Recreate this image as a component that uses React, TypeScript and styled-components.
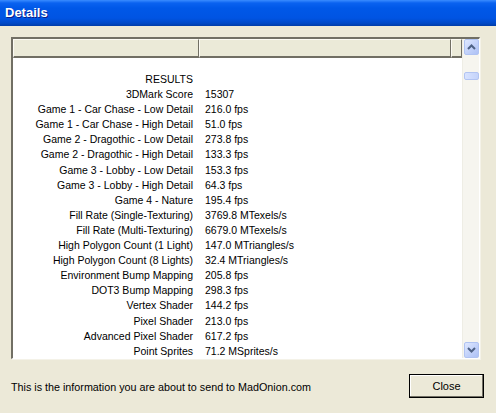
import styled, { createGlobalStyle } from 'styled-components';

const GlobalStyle = createGlobalStyle`
  html, body {
    margin: 0;
    padding: 0;
    background: #ece9d8;
  }
  body {
    font-family: "Liberation Sans", Arial, sans-serif;
  }
`;

const results: [string, string][] = [
  ['RESULTS', ''],
  ['3DMark Score', '15307'],
  ['Game 1 - Car Chase - Low Detail', '216.0 fps'],
  ['Game 1 - Car Chase - High Detail', '51.0 fps'],
  ['Game 2 - Dragothic - Low Detail', '273.8 fps'],
  ['Game 2 - Dragothic - High Detail', '133.3 fps'],
  ['Game 3 - Lobby - Low Detail', '153.3 fps'],
  ['Game 3 - Lobby - High Detail', '64.3 fps'],
  ['Game 4 - Nature', '195.4 fps'],
  ['Fill Rate (Single-Texturing)', '3769.8 MTexels/s'],
  ['Fill Rate (Multi-Texturing)', '6679.0 MTexels/s'],
  ['High Polygon Count (1 Light)', '147.0 MTriangles/s'],
  ['High Polygon Count (8 Lights)', '32.4 MTriangles/s'],
  ['Environment Bump Mapping', '205.8 fps'],
  ['DOT3 Bump Mapping', '298.3 fps'],
  ['Vertex Shader', '144.2 fps'],
  ['Pixel Shader', '213.0 fps'],
  ['Advanced Pixel Shader', '617.2 fps'],
  ['Point Sprites', '71.2 MSprites/s'],
];

const ArrowUp = () => (
  <svg width="9" height="6" viewBox="0 0 9 6">
    <path d="M1 5 L4.5 1.5 L8 5" fill="none" stroke="#4d6185" strokeWidth="2" />
  </svg>
);

const ArrowDown = () => (
  <svg width="9" height="6" viewBox="0 0 9 6">
    <path d="M1 1 L4.5 4.5 L8 1" fill="none" stroke="#4d6185" strokeWidth="2" />
  </svg>
);

const App = () => {
  return (
    <Window>
      <GlobalStyle />
      <TitleBar>Details</TitleBar>
      <Body>
        <ListBox>
          <ListMain>
            <Header>
              <HeaderCell $width={186} />
              <HeaderCell $width={252} />
              <HeaderCell $width={11} />
            </Header>
            <Rows>
              {results.map(([label, value]) => (
                <Row key={label}>
                  <Label>{label}</Label>
                  <Value>{value}</Value>
                </Row>
              ))}
            </Rows>
          </ListMain>
          <ScrollBar>
            <ScrollButton>
              <ArrowUp />
            </ScrollButton>
            <Thumb />
            <Track />
            <ScrollButton>
              <ArrowDown />
            </ScrollButton>
          </ScrollBar>
        </ListBox>
        <Footer>
          <FooterText>This is the information you are about to send to MadOnion.com</FooterText>
          <CloseButton>Close</CloseButton>
        </Footer>
      </Body>
    </Window>
  );
};

const Window = styled.div`
  width: 496px;
  height: 413px;
  display: flex;
  flex-direction: column;
  background: #ece9d8;
  overflow: hidden;
`;

const TitleBar = styled.div`
  height: 26px;
  display: flex;
  align-items: center;
  padding-left: 5px;
  padding-bottom: 1px;
  box-sizing: border-box;
  color: #fff;
  font-weight: bold;
  font-size: 13px;
  text-shadow: 1px 1px 0 #0a1e8c;
  background: linear-gradient(
    to bottom,
    #3a8cff 0px,
    #0a62f0 3px,
    #0058e8 8px,
    #0054e3 18px,
    #0049c8 23px,
    #003ca8 26px
  );
`;

const Body = styled.div`
  flex: 1;
  display: flex;
  flex-direction: column;
  padding: 11px 14px 0 11px;
`;

const ListBox = styled.div`
  height: 322px;
  margin-right: 2px;
  display: flex;
  box-sizing: border-box;
  background: #fff;
  border-top: 2px solid #716f64;
  border-left: 2px solid #716f64;
  border-right: 1px solid #fff;
  border-bottom: 1px solid #fff;
  box-shadow: 1px 1px 0 #f4f2e8;
`;

const ListMain = styled.div`
  flex: 1;
  display: flex;
  flex-direction: column;
  overflow: hidden;
`;

const Header = styled.div`
  display: flex;
  height: 19px;
  flex-shrink: 0;
`;

const HeaderCell = styled.div<{ $width: number }>`
  width: ${(p) => p.$width}px;
  flex-shrink: 0;
  box-sizing: border-box;
  background: #ebead8;
  border-top: 1px solid #fbfaf3;
  border-left: 1px solid #fbfaf3;
  border-right: 1px solid #716f64;
  border-bottom: 2px solid #716f64;
`;

const Rows = styled.div`
  padding-top: 14px;
  font-size: 10.5px;
  color: #000;
`;

const Row = styled.div`
  display: grid;
  grid-template-columns: 186px 1fr;
  height: 15.1px;
  line-height: 15px;
  white-space: nowrap;
`;

const Label = styled.span`
  text-align: right;
  padding-right: 6px;
`;

const Value = styled.span`
  padding-left: 6px;
`;

const ScrollBar = styled.div`
  width: 16px;
  display: flex;
  flex-direction: column;
  background: #f6f5ef;
  border-left: 1px solid #eeede5;
`;

const ScrollButton = styled.div`
  height: 16px;
  margin: 0 0 0 1px;
  display: flex;
  align-items: center;
  justify-content: center;
  box-sizing: border-box;
  border: 1px solid #b0c3f2;
  border-radius: 2px;
  background: linear-gradient(135deg, #dfe8ff 0%, #bfcff9 60%, #adc1f5 100%);
`;

const Thumb = styled.div`
  height: 8px;
  margin: 17px 0 0 1px;
  box-sizing: border-box;
  border: 1px solid #b2c4f2;
  border-radius: 2px;
  background: linear-gradient(to right, #d8e3ff, #c4d3fa);
`;

const Track = styled.div`
  flex: 1;
`;

const Footer = styled.div`
  flex: 1;
  display: flex;
  align-items: center;
  justify-content: space-between;
  margin-right: -2px;
  margin-top: -1px;
`;

const FooterText = styled.span`
  font-size: 10.75px;
  color: #000;
  padding-top: 3px;
`;

const CloseButton = styled.button`
  width: 75px;
  height: 24px;
  padding: 0;
  box-sizing: border-box;
  font-family: "Liberation Sans", Arial, sans-serif;
  font-size: 11px;
  color: #000;
  background: #ece9d8;
  border: 1px solid #000;
  box-shadow: inset -1px -1px 0 #716f64, inset 1px 1px 0 #fff;
`;

export default App;
